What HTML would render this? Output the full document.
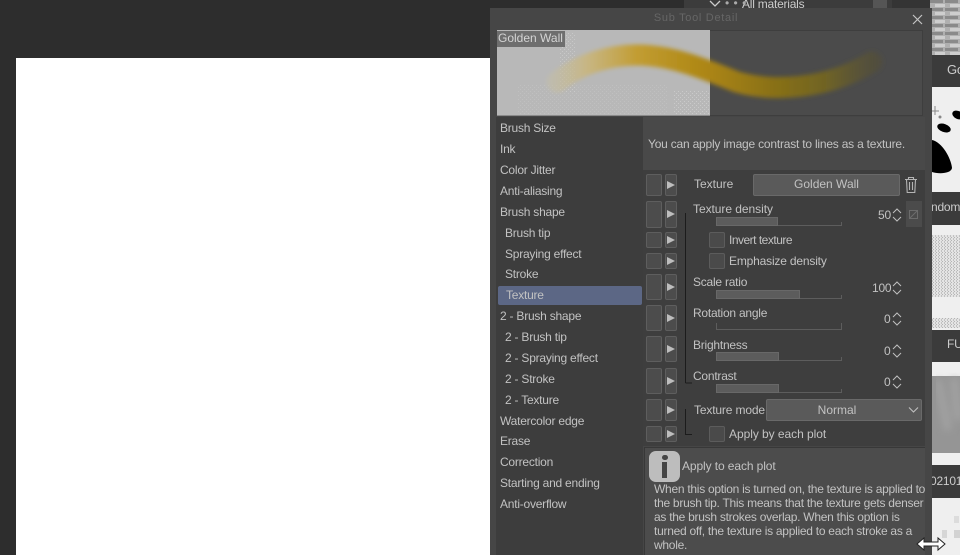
<!DOCTYPE html>
<html>
<head>
<meta charset="utf-8">
<style>
html,body{margin:0;padding:0;background:#2d2d2d}
body{width:960px;height:555px;position:relative;overflow:hidden;font-family:"Liberation Sans",sans-serif;font-size:12px;letter-spacing:-.23px;color:#c2c2c2}
div,span{position:absolute;box-sizing:border-box}
.t{white-space:nowrap;line-height:15px}
.b{background:#4c4c4c;border:1px solid #5e5e5e;border-radius:2px}
.tri{width:0;height:0;border-left:8px solid #bdbdbd;border-top:4.5px solid transparent;border-bottom:4.5px solid transparent}
.cb{width:16px;height:16px;background:#4a4a4a;border:1px solid #5c5c5c;border-radius:2px}
.sl{left:716px;width:126px;height:4px;border-bottom:1px solid #5d5d5d;border-left:1px solid #5d5d5d;border-right:1px solid #5d5d5d}
.fill{left:716px;height:9px;background:#5c5c5c;border:1px solid #686868}
</style>
</head>
<body>
<!-- canvas -->
<div style="left:16px;top:58px;width:474px;height:497px;background:#fff"></div>

<!-- top strip behind panel -->
<div style="left:684px;top:0;width:246px;height:8px;background:#3c3c3c"></div>
<div style="left:892px;top:0;width:38px;height:8px;background:#343434"></div>
<div class="t" style="left:742px;top:-3px;color:#ccc">All materials</div>
<div class="t" style="left:725px;top:-4px;color:#aaa;letter-spacing:.5px">• • •</div>
<svg style="position:absolute;left:709px;top:0" width="14" height="8"><path d="M1 1l5 5 5-5" fill="none" stroke="#ccc" stroke-width="1.3"/></svg>
<div style="left:873px;top:0;width:14px;height:8px;background:#555"></div>

<!-- right column -->
<div style="left:930px;top:0;width:30px;height:555px;background:#efefef"></div>
<svg style="position:absolute;left:930px;top:0" width="30" height="555">
<defs>
<pattern id="brick" width="15" height="8" patternUnits="userSpaceOnUse"><rect width="15" height="8" fill="#b0b0b0"/><rect x="0" y="0" width="13" height="3" fill="#8a8a8a"/><rect x="5" y="4" width="10" height="3" fill="#cecece"/></pattern>
<pattern id="dots" width="3" height="3" patternUnits="userSpaceOnUse"><rect width="3" height="3" fill="#e4e4e4"/><rect width="1" height="1" fill="#b4b4b4"/><rect x="2" y="1" width="1" height="2" fill="#c2c2c2"/></pattern>
<filter id="soft"><feGaussianBlur stdDeviation="4"/></filter>
</defs>
<rect x="0" y="0" width="30" height="55" fill="url(#brick)"/>
<path d="M2 140C12 142 21 158 22 168C21 174 8 174 2 172Z" fill="#000"/>
<ellipse cx="14" cy="128" rx="7" ry="4" transform="rotate(20 14 128)" fill="#000"/>
<ellipse cx="28" cy="115" rx="6" ry="4" transform="rotate(25 28 115)" fill="#000"/>
<path d="M1 111h8M5 106v9" stroke="#888" stroke-width="1"/>
<circle cx="10" cy="117" r="1.5" fill="#888"/>
<rect x="0" y="235" width="30" height="62" fill="url(#dots)"/>
<rect x="0" y="318" width="30" height="10" fill="url(#dots)"/>
<rect x="0" y="376" width="30" height="77" fill="#959595"/>
<path d="M8 380L18 430M24 378L28 420" stroke="#a6a6a6" stroke-width="6" fill="none" filter="url(#soft)"/>
<rect x="24" y="516" width="5" height="7" fill="#dcdcdc"/><rect x="12" y="530" width="5" height="8" fill="#d6d6d6"/><rect x="24" y="530" width="6" height="8" fill="#d2d2d2"/>
</svg>
<div style="left:930px;top:55px;width:30px;height:32px;background:#3b3b3b"></div>
<div class="t" style="left:947px;top:62px;color:#ccc;font-size:13px">Go</div>
<div style="left:930px;top:192px;width:30px;height:33px;background:#3b3b3b"></div>
<div class="t" style="left:931px;top:200px;color:#ccc">ndom</div>
<div style="left:930px;top:330px;width:30px;height:32px;background:#3b3b3b"></div>
<div class="t" style="left:947px;top:337px;color:#ccc">FU</div>
<div style="left:930px;top:465px;width:30px;height:33px;background:#3b3b3b"></div>
<div class="t" style="left:930px;top:474px;color:#ccc">02101</div>

<!-- panel -->
<div style="left:490px;top:8px;width:442px;height:547px;background:#464646"></div>
<div class="t" style="left:490px;top:11px;width:412px;text-align:center;font-size:11px;letter-spacing:.7px;color:#666">Sub Tool Detail</div>
<svg style="position:absolute;left:911px;top:13px" width="13" height="13"><path d="M2 2l9 9M11 2l-9 9" stroke="#c4c4c4" stroke-width="1.2"/></svg>

<!-- preview -->
<svg style="position:absolute;left:497px;top:30px" width="426" height="86">
<defs>
<filter id="bl" x="-10%" y="-50%" width="120%" height="200%"><feGaussianBlur stdDeviation="2.2"/></filter>
<linearGradient id="g" gradientUnits="userSpaceOnUse" x1="50" x2="380" y1="0" y2="0">
<stop offset="0" stop-color="#c4bfa8" stop-opacity=".5"/>
<stop offset=".12" stop-color="#c9b67e" stop-opacity=".9"/>
<stop offset=".27" stop-color="#c29d33"/>
<stop offset=".48" stop-color="#ad8612"/>
<stop offset=".68" stop-color="#8a7114"/>
<stop offset=".85" stop-color="#6f6325"/>
<stop offset="1" stop-color="#565033" stop-opacity=".5"/>
</linearGradient>
<pattern id="spk" width="4" height="4" patternUnits="userSpaceOnUse"><rect x="1" y="1" width="1" height="1" fill="#cfcfcf"/><rect x="3" y="3" width="1" height="1" fill="#cfcfcf"/></pattern>
</defs>
<rect width="213" height="86" fill="#b8b8b8"/>
<rect x="213" width="213" height="86" fill="#4b4b4b"/>
<rect x="62" y="2" width="16" height="60" fill="url(#spk)" opacity=".7"/>
<rect x="176" y="60" width="37" height="26" fill="url(#spk)" opacity=".8"/>
<rect x="20" y="55" width="150" height="31" fill="url(#spk)" opacity=".35"/>
<path d="M60 52C85 32 115 25 140 25C175 25 210 40 240 52C275 62 330 60 375 32" fill="none" stroke="url(#g)" stroke-width="21" stroke-linecap="round" filter="url(#bl)"/>
<rect x="0" y="85" width="213" height="1" fill="#8a8a8a"/>
<path d="M213 .5H425.5V85.5H213" fill="none" stroke="#3e3e3e"/>
</svg>
<div class="t" style="left:497px;top:31px;width:68px;height:16px;background:#6e6e6e;color:#d4d4d4;padding-left:1px;letter-spacing:0">Golden Wall</div>

<!-- left list -->
<div style="left:496px;top:117px;width:147px;height:438px;background:#3d3d3d"></div>
<div style="left:498px;top:286px;width:144px;height:19px;background:#5c6785;border-radius:2px"></div>
<div class="t" style="left:500px;top:121px">Brush Size</div>
<div class="t" style="left:500px;top:142px">Ink</div>
<div class="t" style="left:500px;top:163px">Color Jitter</div>
<div class="t" style="left:500px;top:184px">Anti-aliasing</div>
<div class="t" style="left:500px;top:205px">Brush shape</div>
<div class="t" style="left:505px;top:226px">Brush tip</div>
<div class="t" style="left:505px;top:247px">Spraying effect</div>
<div class="t" style="left:505px;top:267px">Stroke</div>
<div class="t" style="left:506px;top:288px">Texture</div>
<div class="t" style="left:500px;top:309px">2 - Brush shape</div>
<div class="t" style="left:505px;top:330px">2 - Brush tip</div>
<div class="t" style="left:505px;top:351px">2 - Spraying effect</div>
<div class="t" style="left:505px;top:372px">2 - Stroke</div>
<div class="t" style="left:505px;top:393px">2 - Texture</div>
<div class="t" style="left:500px;top:414px">Watercolor edge</div>
<div class="t" style="left:500px;top:434px">Erase</div>
<div class="t" style="left:500px;top:455px">Correction</div>
<div class="t" style="left:500px;top:476px">Starting and ending</div>
<div class="t" style="left:500px;top:497px">Anti-overflow</div>

<!-- description top -->
<div style="left:643px;top:117px;width:282px;height:53px;background:#494949"></div>
<div class="t" style="left:648px;top:137px;letter-spacing:-.21px">You can apply image contrast to lines as a texture.</div>

<!-- settings area -->
<div style="left:643px;top:170px;width:282px;height:276px;background:#3e3e3e"></div>

<!-- left button columns -->
<div class="b" style="left:646px;top:174px;width:16px;height:22px"></div><div class="b" style="left:665px;top:174px;width:12px;height:22px"></div><div class="tri" style="left:667px;top:181px"></div>
<div class="b" style="left:646px;top:201px;width:16px;height:27px"></div><div class="b" style="left:665px;top:201px;width:12px;height:27px"></div><div class="tri" style="left:667px;top:210px"></div>
<div class="b" style="left:646px;top:232px;width:16px;height:16px"></div><div class="b" style="left:665px;top:232px;width:12px;height:16px"></div><div class="tri" style="left:667px;top:236px"></div>
<div class="b" style="left:646px;top:253px;width:16px;height:16px"></div><div class="b" style="left:665px;top:253px;width:12px;height:16px"></div><div class="tri" style="left:667px;top:257px"></div>
<div class="b" style="left:646px;top:274px;width:16px;height:26px"></div><div class="b" style="left:665px;top:274px;width:12px;height:26px"></div><div class="tri" style="left:667px;top:283px"></div>
<div class="b" style="left:646px;top:305px;width:16px;height:26px"></div><div class="b" style="left:665px;top:305px;width:12px;height:26px"></div><div class="tri" style="left:667px;top:314px"></div>
<div class="b" style="left:646px;top:336px;width:16px;height:26px"></div><div class="b" style="left:665px;top:336px;width:12px;height:26px"></div><div class="tri" style="left:667px;top:345px"></div>
<div class="b" style="left:646px;top:368px;width:16px;height:26px"></div><div class="b" style="left:665px;top:368px;width:12px;height:26px"></div><div class="tri" style="left:667px;top:377px"></div>
<div class="b" style="left:646px;top:399px;width:16px;height:22px"></div><div class="b" style="left:665px;top:399px;width:12px;height:22px"></div><div class="tri" style="left:667px;top:406px"></div>
<div class="b" style="left:646px;top:426px;width:16px;height:16px"></div><div class="b" style="left:665px;top:426px;width:12px;height:16px"></div><div class="tri" style="left:667px;top:430px"></div>

<!-- brackets -->
<svg style="position:absolute;left:680px;top:205px" width="16" height="240"><path d="M5.5 8V178M5.5 178H12M5.5 204V229.5H12" fill="none" stroke="#1c1c1c" stroke-width="1"/></svg>

<!-- rows -->
<div class="t" style="left:694px;top:177px;letter-spacing:0">Texture</div>
<div style="left:753px;top:174px;width:147px;height:22px;background:#5a5a5a;border:1px solid #696969;border-radius:2px"></div>
<div class="t" style="left:753px;top:177px;width:147px;text-align:center;letter-spacing:0">Golden Wall</div>
<svg style="position:absolute;left:903px;top:176px" width="16" height="18"><path d="M2 3.5h12M5.5 3.5V1.5h5v2M3.5 3.5l.7 13h7.6l.7-13M6.5 6v8M9.5 6v8" fill="none" stroke="#b4b4b4" stroke-width="1.1"/></svg>

<div class="t" style="left:693px;top:202px;letter-spacing:-.05px">Texture density</div>
<div class="sl" style="top:222px"></div><div class="fill" style="top:217px;width:62px"></div>
<div class="t" style="left:878px;top:208px">50</div>
<svg style="position:absolute;left:892px;top:208px" width="10" height="14"><path d="M1 5l4-4 4 4M1 9l4 4 4-4" fill="none" stroke="#c0c0c0"/></svg>
<div style="left:906px;top:201px;width:16px;height:26px;background:#4b4b4b"></div>
<svg style="position:absolute;left:908px;top:209px" width="11" height="11"><rect x="1.5" y="1.5" width="8" height="8" fill="none" stroke="#6c6c6c"/><path d="M1.5 9.5l8-8" stroke="#6c6c6c"/></svg>

<div class="cb" style="left:709px;top:232px"></div>
<div class="t" style="left:729px;top:233px;letter-spacing:-.5px">Invert texture</div>
<div class="cb" style="left:709px;top:253px"></div>
<div class="t" style="left:729px;top:254px;letter-spacing:-.18px">Emphasize density</div>

<div class="t" style="left:693px;top:275px">Scale ratio</div>
<div class="sl" style="top:295px"></div><div class="fill" style="top:290px;width:84px"></div>
<div class="t" style="left:872px;top:281px">100</div>
<svg style="position:absolute;left:892px;top:281px" width="10" height="14"><path d="M1 5l4-4 4 4M1 9l4 4 4-4" fill="none" stroke="#c0c0c0"/></svg>

<div class="t" style="left:693px;top:306px">Rotation angle</div>
<div class="sl" style="top:323px;height:7px"></div>
<div class="t" style="left:884px;top:312px">0</div>
<svg style="position:absolute;left:892px;top:312px" width="10" height="14"><path d="M1 5l4-4 4 4M1 9l4 4 4-4" fill="none" stroke="#c0c0c0"/></svg>

<div class="t" style="left:693px;top:338px">Brightness</div>
<div class="sl" style="top:357px"></div><div class="fill" style="top:352px;width:63px"></div>
<div class="t" style="left:884px;top:344px">0</div>
<svg style="position:absolute;left:892px;top:344px" width="10" height="14"><path d="M1 5l4-4 4 4M1 9l4 4 4-4" fill="none" stroke="#c0c0c0"/></svg>

<div class="t" style="left:693px;top:369px">Contrast</div>
<div class="sl" style="top:389px"></div><div class="fill" style="top:384px;width:63px"></div>
<div class="t" style="left:884px;top:375px">0</div>
<svg style="position:absolute;left:892px;top:375px" width="10" height="14"><path d="M1 5l4-4 4 4M1 9l4 4 4-4" fill="none" stroke="#c0c0c0"/></svg>

<div class="t" style="left:694px;top:403px;letter-spacing:-.15px">Texture mode</div>
<div style="left:766px;top:399px;width:156px;height:22px;background:#5a5a5a;border:1px solid #696969;border-radius:2px"></div>
<div class="t" style="left:766px;top:403px;width:142px;text-align:center;letter-spacing:0">Normal</div>
<svg style="position:absolute;left:908px;top:406px" width="11" height="8"><path d="M1 1.5l4.5 4.5 4.5-4.5" fill="none" stroke="#c0c0c0" stroke-width="1.1"/></svg>

<div class="cb" style="left:709px;top:426px"></div>
<div class="t" style="left:729px;top:427px;letter-spacing:-.05px">Apply by each plot</div>

<!-- help -->
<div style="left:644px;top:447px;width:281px;height:108px;background:#4c4c4c;border-top:1px solid #383838;border-left:1px solid #383838"></div>
<div style="left:649px;top:451px;width:31px;height:31px;background:#bdbdbd;border-radius:7px"></div>
<div style="left:661.5px;top:455px;width:6px;height:5px;background:#454545;border-radius:2.5px"></div>
<div style="left:662px;top:462px;width:5px;height:16px;background:#454545"></div>
<div class="t" style="left:682px;top:459px;letter-spacing:-.1px">Apply to each plot</div>
<div class="t" style="left:654px;top:482px;line-height:14px;letter-spacing:-.27px">When this option is turned on, the texture is applied to<br>the brush tip. This means that the texture gets denser<br>as the brush strokes overlap. When this option is<br>turned off, the texture is applied to each stroke as a<br>whole.</div>

<!-- cursor -->
<svg style="position:absolute;left:915px;top:535px" width="32" height="18"><path d="M2 9L9 3v4h14V3l7 6-7 6v-4H9v4Z" fill="#fff" stroke="#222" stroke-width="1"/></svg>
</body>
</html>
